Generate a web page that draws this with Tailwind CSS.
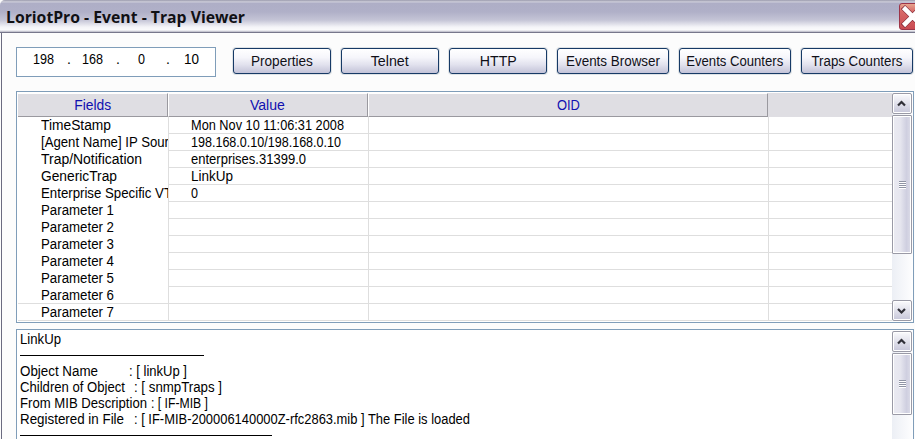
<!DOCTYPE html>
<html lang="en">
<head>
<meta charset="utf-8">
<title>LoriotPro - Event - Trap Viewer</title>
<script src="https://cdn.jsdelivr.net/npm/@tailwindcss/browser@4"></script>
</head>
<body class="w-[915px] h-[439px] overflow-hidden bg-[#fcfcfc] text-black text-[14px] whitespace-nowrap font-['Liberation_Sans',Arial,sans-serif]">
<div class="w-[915px] h-[439px] flex flex-col overflow-hidden [&_[data-w]]:inline-block [&_[data-w]]:origin-left">
  <header class="h-[33px] shrink-0 relative flex items-start pl-[6px] pt-[6px] border-b border-[#77778b] rounded-tl-[5px] bg-[linear-gradient(to_bottom,#9a9aac_0px,#d0d0dc_2px,#aeaec6_3px,#b0b0c8_12px,#c4c4d6_20px,#f4f4f8_27px,#fafafc_30px,#b4b4c2_32px)]">
    <h1 class="text-[15.5px] leading-[23px] font-bold font-[Open_Sans,Noto_Sans,sans-serif] text-[#101014]"><span data-w="239">LoriotPro - Event - Trap Viewer</span></h1>
    <svg class="absolute left-[899px] top-[3px]" width="27" height="27" viewBox="0 0 27 27">
      <defs><linearGradient id="cl" x1="0" y1="0" x2="0" y2="1"><stop offset="0" stop-color="#e8a890"/><stop offset=".3" stop-color="#d86a68"/><stop offset="1" stop-color="#c94a52"/></linearGradient></defs>
      <rect x=".5" y=".5" width="26" height="26" rx="2.500" fill="url(#cl)" stroke="#9c3448"/>
      <path d="M4 4L22 22M4 23L22 5" stroke="#7a2030" stroke-width="5.800"/>
      <path d="M4.500 4.500L22 22M4.500 22.500L22 5" stroke="#fff" stroke-width="4.600"/>
    </svg>
  </header>
  <main class="flex-1 min-h-0 ml-px border-l border-[#6b6b80] pl-[14px] flex flex-col">
    <div class="mt-[14px] h-[30px] shrink-0 flex items-start">
      <div class="w-[200px] h-[30px] bg-white border border-[#7f9db9] grid grid-cols-[16px_34px_15px_34px_22px_28px_18px_1fr] leading-[22px]">
        <span></span><span><span data-w="21">198</span></span><span>.</span><span><span data-w="21">168</span></span><span>.</span><span><span data-w="7">0</span></span><span>.</span><span><span data-w="15">10</span></span>
      </div>
      <nav class="ml-[17px] mt-px flex gap-[10px] leading-[25px] [&>button]:h-[26px] [&>button]:rounded-[3px] [&>button]:border [&>button]:border-[#173a66] [&>button]:bg-[linear-gradient(to_bottom,#ffffff,#f6f6fb_35%,#e2e2ee_65%,#c3c3d8)] [&>button]:shadow-[0_0_0_1px_#dfe3e6] [&>button]:text-[#101018] [&_span]:origin-center!">
        <button class="w-[98px]"><span data-w="62">Properties</span></button>
        <button class="w-[98px]"><span data-w="38">Telnet</span></button>
        <button class="w-[98px]"><span data-w="37">HTTP</span></button>
        <button class="w-[112px]"><span data-w="94">Events Browser</span></button>
        <button class="w-[112px]"><span data-w="97">Events Counters</span></button>
        <button class="w-[112px]"><span data-w="91">Traps Counters</span></button>
      </nav>
    </div>

    <section class="mt-[14px] w-[898px] h-[232px] shrink-0 bg-white border border-[#7f9db9] p-px flex">
      <div class="w-[874px] flex flex-col">
        <div class="h-[24px] shrink-0 flex bg-[#dfdee3] text-[#1010b0] text-center leading-[23px] [&_span]:origin-center!">
          <div class="w-[150px] border-r border-b border-[#9a999f] border-t border-t-white"><span data-w="37">Fields</span></div>
          <div class="w-[200px] pr-[2px] border-l border-l-white border-r border-b border-[#9a999f] border-t border-t-white"><span data-w="35">Value</span></div>
          <div class="w-[400px] border-l border-l-white border-r border-b border-[#9a999f] border-t border-t-white"><span data-w="23">OID</span></div>
          <div class="flex-1"></div>
        </div>
        <div id="rows" class="flex flex-col"></div>
      </div>
      <div class="w-[20px] h-[228px] flex flex-col bg-[linear-gradient(to_right,#eceff5,#fdfdfe)] [&>svg]:block [&>svg]:shrink-0">
        <svg width="20" height="22"><use href="#up"/></svg>
        <div class="h-[139px] shrink-0 border border-[#9a9aa6] rounded-[1px] shadow-[inset_0_0_0_1px_#fff] bg-[linear-gradient(to_right,#e9e9f1_2px,#e6e6ef_40%,#cfcfe0_75%,#dcdce8)] flex items-center justify-center"><i class="w-[7px] h-[8px] bg-[repeating-linear-gradient(to_bottom,#8f94a4_0_1px,#fff_1px_2px)]"></i></div>
        <div class="flex-1"></div>
        <svg width="20" height="21"><use href="#down"/></svg>
      </div>
    </section>

    <section class="mt-[6px] w-[898px] h-[140px] shrink-0 bg-white border border-[#7f9db9] pl-[3px] pt-px pr-px flex">
      <div class="w-[872px] leading-[16px]">
        <div class="h-[16px]"><span data-w="41">LinkUp</span></div>
        <div class="h-[16px] pt-[8px]"><div class="h-px w-[184px] bg-black"></div></div>
        <div class="h-[16px] flex"><span class="w-[109px]"><span data-w="78">Object Name</span></span><span data-w="58">: [ linkUp ]</span></div>
        <div class="h-[16px] flex"><span class="w-[114px]"><span data-w="105">Children of Object</span></span><span data-w="88">: [ snmpTraps ]</span></div>
        <div class="h-[16px] flex"><span class="w-[131px]"><span data-w="127">From MIB Description</span></span><span data-w="57">: [ IF-MIB ]</span></div>
        <div class="h-[16px] flex"><span class="w-[114px]"><span data-w="104">Registered in File</span></span><span data-w="336">: [ IF-MIB-200006140000Z-rfc2863.mib ] The File is loaded</span></div>
        <div class="h-[10px] pt-[8px]"><div class="h-px w-[252px] bg-black"></div></div>
      </div>
      <div class="w-[20px] flex flex-col bg-[linear-gradient(to_right,#eceff5,#fdfdfe)] [&>svg]:block [&>svg]:shrink-0">
        <svg width="20" height="22"><use href="#up"/></svg>
        <div class="h-[62px] shrink-0 border border-[#9a9aa6] rounded-[1px] shadow-[inset_0_0_0_1px_#fff] bg-[linear-gradient(to_right,#e9e9f1_2px,#e6e6ef_40%,#cfcfe0_75%,#dcdce8)] flex items-center justify-center"><i class="w-[7px] h-[8px] bg-[repeating-linear-gradient(to_bottom,#8f94a4_0_1px,#fff_1px_2px)]"></i></div>
      </div>
    </section>
  </main>
</div>
<svg width="0" height="0" class="absolute">
  <defs>
    <linearGradient id="bg" x1="0" y1="0" x2="0" y2="1"><stop offset="0" stop-color="#f8f8fb"/><stop offset=".35" stop-color="#e8e8f0"/><stop offset="1" stop-color="#c9c9db"/></linearGradient>
    <g id="box"><rect x=".5" y=".5" width="19" height="20" rx="1.500" fill="#fff" stroke="#9a9aa6"/><rect x="2" y="2" width="16" height="17" fill="url(#bg)"/></g>
    <g id="up"><use href="#box"/><path d="M6 12.500L9.500 9L13 12.500" fill="none" stroke="#303038" stroke-width="2.200"/></g>
    <g id="down"><use href="#box"/><path d="M6 9L9.500 12.500L13 9" fill="none" stroke="#303038" stroke-width="2.200"/></g>
  </defs>
</svg>
<script>
const rows = [
  ['TimeStamp', 70, 'Mon Nov 10 11:06:31 2008', 153],
  ['[Agent Name] IP Sour', 128, '198.168.0.10/198.168.0.10', 150],
  ['Trap/Notification', 101, 'enterprises.31399.0', 115],
  ['GenericTrap', 76, 'LinkUp', 42],
  ['Enterprise Specific VT', 131, '0', 7],
  ...[1, 2, 3, 4, 5, 6, 7].map(n => ['Parameter ' + n, 73, '', 0])
];
document.getElementById('rows').innerHTML = rows.map(([f, fw, v, vw], i) => `
<div class="h-[17px] flex leading-[16px]">
  <div class="w-[150px] pl-[23px] overflow-hidden ${i > 9 ? 'border-b border-[#dedede]' : ''}"><span data-w="${fw}">${f}</span></div>
  <div class="w-[200px] pl-[22px] border-l border-b border-[#dedede]"><span data-w="${vw}">${v}</span></div>
  <div class="w-[400px] border-l border-b border-[#dedede]"></div>
  <div class="flex-1 border-l border-b border-[#dedede]"></div>
</div>`).join('');
/* Scale each label horizontally to its nominal width, once styles are in place. */
function fit() {
  document.querySelectorAll('[data-w]').forEach(s => {
    const w = +s.dataset.w;
    s.style.transform = 'none';
    const natural = s.getBoundingClientRect().width;
    if (w && natural) s.style.transform = 'scaleX(' + w / natural + ')';
  });
}
fit();
addEventListener('load', fit);
new MutationObserver(fit).observe(document.head, { childList: true, subtree: true });
new ResizeObserver(fit).observe(document.querySelector('h1'));
</script>
</body>
</html>
